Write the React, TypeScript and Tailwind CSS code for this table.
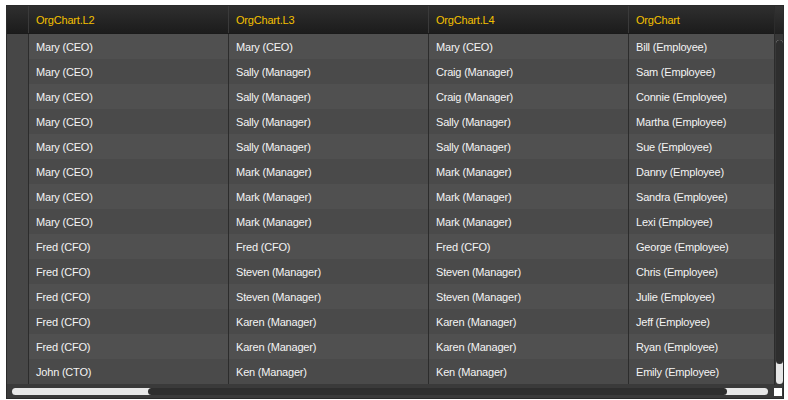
const rows: [string, string, string, string][] = [
  ["Mary (CEO)", "Mary (CEO)", "Mary (CEO)", "Bill (Employee)"],
  ["Mary (CEO)", "Sally (Manager)", "Craig (Manager)", "Sam (Employee)"],
  ["Mary (CEO)", "Sally (Manager)", "Craig (Manager)", "Connie (Employee)"],
  ["Mary (CEO)", "Sally (Manager)", "Sally (Manager)", "Martha (Employee)"],
  ["Mary (CEO)", "Sally (Manager)", "Sally (Manager)", "Sue (Employee)"],
  ["Mary (CEO)", "Mark (Manager)", "Mark (Manager)", "Danny (Employee)"],
  ["Mary (CEO)", "Mark (Manager)", "Mark (Manager)", "Sandra (Employee)"],
  ["Mary (CEO)", "Mark (Manager)", "Mark (Manager)", "Lexi (Employee)"],
  ["Fred (CFO)", "Fred (CFO)", "Fred (CFO)", "George (Employee)"],
  ["Fred (CFO)", "Steven (Manager)", "Steven (Manager)", "Chris (Employee)"],
  ["Fred (CFO)", "Steven (Manager)", "Steven (Manager)", "Julie (Employee)"],
  ["Fred (CFO)", "Karen (Manager)", "Karen (Manager)", "Jeff (Employee)"],
  ["Fred (CFO)", "Karen (Manager)", "Karen (Manager)", "Ryan (Employee)"],
  ["John (CTO)", "Ken (Manager)", "Ken (Manager)", "Emily (Employee)"],
];

const headers = ["OrgChart.L2", "OrgChart.L3", "OrgChart.L4", "OrgChart"];
const widths = ["w-[200px]", "w-[200px]", "w-[200px]", "w-[145px]"];

export default function App() {
  return (
    <div className="h-[400px] w-[788px] bg-white pl-[6px] pt-[5px] font-['Liberation_Sans',sans-serif] text-[11px] tracking-[-0.2px]">
      <div className="flex h-[394px] w-[778px] flex-col border border-[#2a2a2a] bg-[#3a3a3a]">
        <div className="flex flex-1">
          <div className="flex flex-col">
            {/* header */}
            <div className="flex h-[28px] bg-gradient-to-b from-[#2f2f2f] to-[#1c1c1c] border-b border-[#1a1a1a]">
              <div className="w-[22px] border-r border-[#3a3a3a]" />
              {headers.map((h, i) => (
                <div
                  key={h}
                  className={`${widths[i]} flex items-center px-[7px] pt-[1px] text-[#f3c000] ${i < 3 ? "border-r border-[#3a3a3a]" : ""}`}
                >
                  {h}
                </div>
              ))}
            </div>
            {rows.map((r, ri) => (
              <div
                key={ri}
                className={`flex h-[25px] ${ri % 2 === 0 ? "bg-[#505050]" : "bg-[#4a4a4a]"}`}
              >
                <div className="w-[22px] border-r border-[#2c2c2c] bg-[#474747]" />
                {r.map((c, ci) => (
                  <div
                    key={ci}
                    className={`${widths[ci]} flex items-center px-[7px] pt-[2px] text-[#f4f4f4] ${ci < 3 ? "border-r border-[#2c2c2c]" : ""}`}
                  >
                    {c}
                  </div>
                ))}
              </div>
            ))}
          </div>
          {/* vertical scrollbar */}
          <div className="flex w-[10px] flex-col border-l border-[#2c2c2c]">
            <div className="h-[28px] bg-gradient-to-b from-[#343434] to-[#202020]" />
            <div className="flex flex-1 justify-center bg-[#383838] pt-[6px] pb-[1px]">
              <div className="flex w-[7px] flex-col rounded-full bg-[#e6e6e6]">
                <div className="h-[324px] rounded-full bg-[#2e2e2e]" />
              </div>
            </div>
          </div>
        </div>
        {/* horizontal scrollbar */}
        <div className="flex h-[13px] items-center bg-[#3a3a3a] pl-[5px]">
          <div className="flex h-[7px] w-[756px] rounded-full bg-[#e8e8e8]">
            <div className="ml-[136px] h-[7px] w-[579px] rounded-full bg-[#2e2e2e]" />
          </div>
          <div className="ml-[6px] h-[8px] w-[8px] bg-white" />
        </div>
      </div>
    </div>
  );
}
